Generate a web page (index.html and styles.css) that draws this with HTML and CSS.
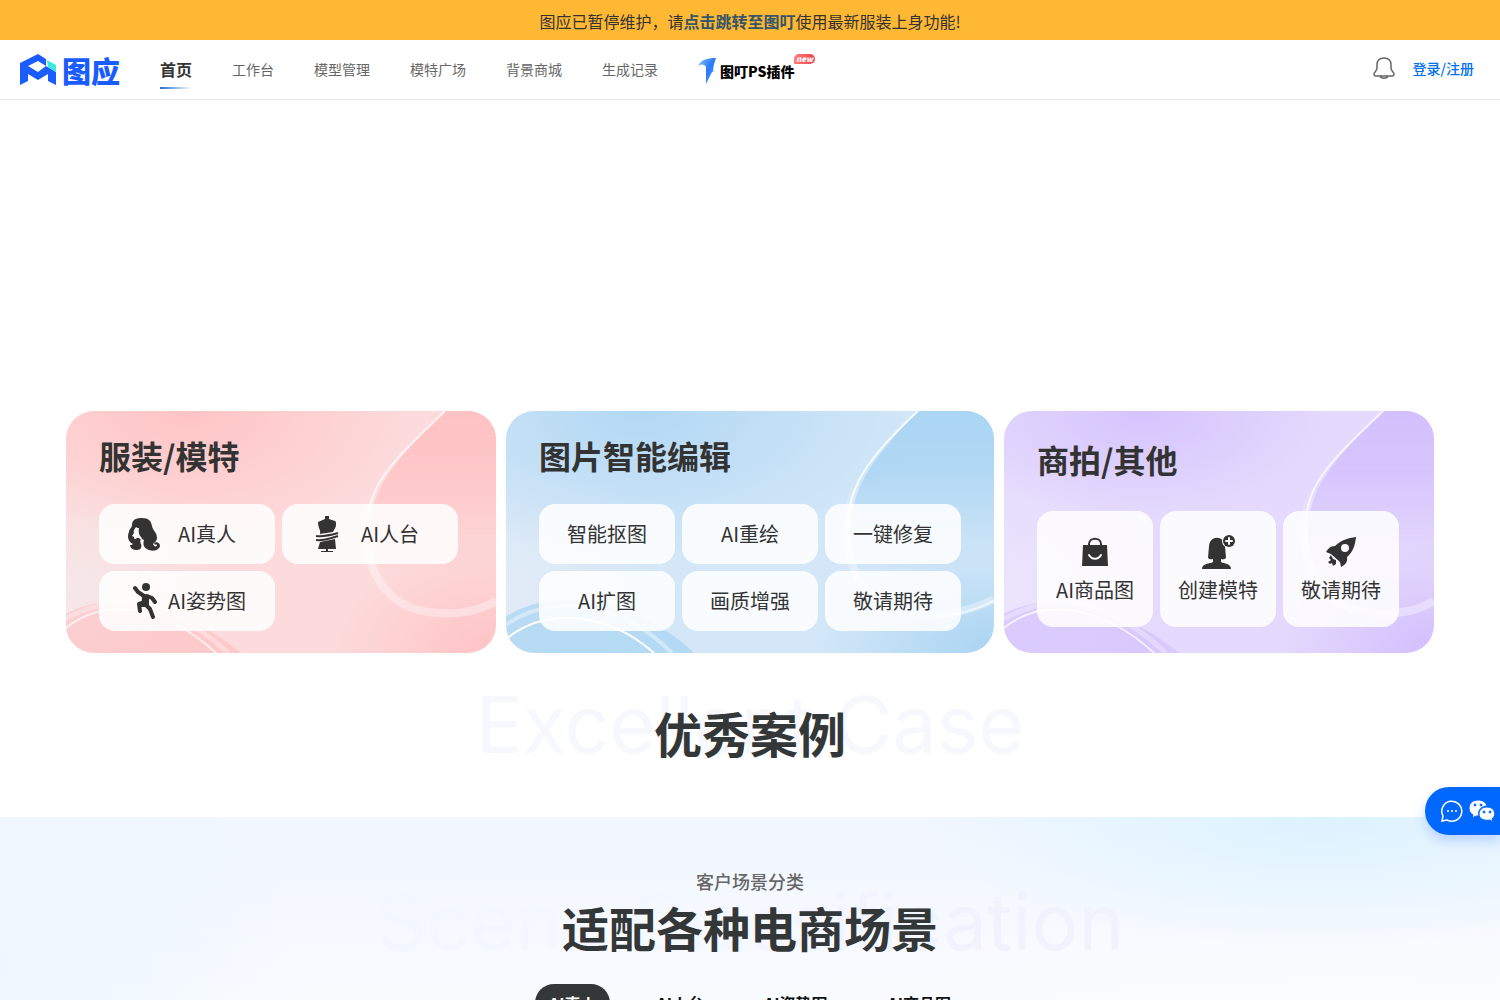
FILE: index.html
```
<!DOCTYPE html>
<html lang="zh-CN">
<head>
  <meta charset="UTF-8" />
  <meta name="viewport" content="width=device-width, initial-scale=1.0" />
  <title>图应</title>
  <link rel="stylesheet" href="styles.css">
</head>
<body>
  <svg class="defs" aria-hidden="true">
    <linearGradient id="fade" x1="0" y1="0" x2="0" y2="1">
      <stop offset="0" stop-color="#fff" />
      <stop offset=".3" stop-color="#fff" stop-opacity=".8" />
      <stop offset=".8" stop-color="#fff" stop-opacity="0" />
    </linearGradient>
    <mask id="fade-mask" maskContentUnits="objectBoundingBox">
      <rect width="1" height="1" fill="url(#fade)" />
    </mask>
    <linearGradient id="line-fade" x1="0" y1="0" x2="0" y2="1">
      <stop offset="0" stop-color="#fff" stop-opacity="0" />
      <stop offset=".4" stop-color="#fff" />
    </linearGradient>
    <symbol id="wave" viewBox="0 0 430 242" preserveAspectRatio="none">
      <path class="wave-fill" mask="url(#fade-mask)" d="M380 0C350 28 329 50 315 76C296 112 302 160 331 186C350 203 400 203 430 184V0Z" opacity=".7" />
      <path class="wave-fill" d="M0 203C40 180 110 190 175 242H0Z" opacity=".5" />
      <path class="wave-band" d="M311 76C292 112 298 160 327 186C350 206 400 208 430 190" stroke-width="8" opacity=".35" />
      <path class="wave-line" d="M379 0C350 28 325 50 311 76C304 90 301 106 301 122" stroke-width="2" opacity=".7" />
      <path class="wave-line" d="M0 217C40 184 100 196 150 242" stroke-width="2" opacity=".7" />
      <path class="wave-line" d="M0 208C40 184 100 184 162 242" stroke-width="5" opacity=".3" />
    </symbol>
    <symbol id="wave-wide" viewBox="0 0 488 242" preserveAspectRatio="none">
      <path class="wave-fill" mask="url(#fade-mask)" d="M413 0C390 22 372 44 361 62C342 92 342 130 351 156C366 196 424 214 488 184V0Z" opacity=".8" />
      <path class="wave-fill" d="M0 206C40 176 130 186 188 242H0Z" opacity=".6" />
      <path class="wave-band" d="M357 62C338 92 338 130 347 156C362 200 424 220 488 188" stroke-width="8" opacity=".35" />
      <path class="wave-line" d="M412 0C388 22 368 44 357 62C345 82 341 102 341 122" stroke-width="2" opacity=".8" />
      <path class="wave-line" d="M430 206C454 204 472 198 488 190" stroke-width="2" opacity=".6" />
      <path class="wave-line" d="M0 228C40 196 100 200 148 242" stroke-width="2" />
      <path class="wave-line" d="M0 214C40 184 110 186 166 242" stroke-width="4" opacity=".4" />
    </symbol>
  </svg>

  <div class="notice">
    图应已暂停维护，请<a href="#">点击跳转至图叮</a>使用最新服装上身功能!
  </div>

  <header class="header">
    <a class="logo" href="#">
      <svg class="logo-mark" viewBox="0 0 36 32" aria-hidden="true">
        <path fill="#1a5cff" fill-rule="evenodd" d="M18 0L26 5V12L36 18V31L28 27V20L18 26L8 20V27L0 31V9ZM18 7L8 12L18 18L26 12Z" />
        <path fill="#3ee8dc" d="M27 6L36 11V18L28 13Z" />
      </svg>
      <span class="logo-text">图应</span>
    </a>
    <nav class="nav">
      <a class="nav-link active" href="#">首页</a>
      <a class="nav-link" href="#">工作台</a>
      <a class="nav-link" href="#">模型管理</a>
      <a class="nav-link" href="#">模特广场</a>
      <a class="nav-link" href="#">背景商城</a>
      <a class="nav-link" href="#">生成记录</a>
      <a class="plugin" href="#">
        <svg class="plugin-mark" viewBox="0 0 18 26" aria-hidden="true">
          <defs>
            <linearGradient id="plugin-blue" x1="0" y1="0" x2="1" y2="1">
              <stop offset="0" stop-color="#8cc4ff" />
              <stop offset=".5" stop-color="#2878ff" />
              <stop offset="1" stop-color="#5fa4ff" />
            </linearGradient>
          </defs>
          <path fill="url(#plugin-blue)" d="M0 8C3 2 8 0 18 0L16 6L15 12L16 13L14 14L8 26V9C6 6 3 6 0 8Z" />
        </svg>
        <span class="plugin-text">图叮PS插件</span>
        <span class="badge">new</span>
      </a>
    </nav>
    <div class="user">
      <button class="bell" type="button" aria-label="通知">
        <svg viewBox="0 0 22 24" aria-hidden="true">
          <path d="M11 2C6 2 4 5 4 9V12C4 15 1 16 1 18C1 19 2 20 3 20H19C20 20 21 19 21 18C21 16 18 15 18 12V9C18 5 16 2 11 2ZM7 20C8 23 14 23 15 20" />
        </svg>
      </button>
      <a class="login" href="#">登录/注册</a>
    </div>
  </header>

  <main>
    <section class="hero"></section>

    <section class="cards">
      <div class="card card-pink">
        <svg class="card-bg" aria-hidden="true"><use href="#wave" /></svg>
        <h2>服装/模特</h2>
        <div class="tiles tiles-two">
          <a class="tile" href="#">
            <svg class="tile-icon" viewBox="0 0 36 36" aria-hidden="true">
              <path d="M6 9C6 3 11 2 16 2C23 2 25 5 26 10C27 15 31 16 31 22C31 25 28 27 27 28C28 31 31 31 31 29C31 28 29 29 28 28C29 25 34 26 34 30C33 35 25 36 21 33C17 31 17 27 18 24L16 23C14 23 14 26 15 28C16 31 15 34 11 34C7 34 4 32 4 29C5 29 6 29 7 28C2 26 1 20 3 16C3 13 6 12 6 9ZM10 11C9 13 7 14 8 17L6 20L8 21C8 23 9 24 11 22L13 22L15 24L16 22C14 20 12 18 13 12C12 12 11 12 10 11Z" fill-rule="evenodd" />
            </svg>
            <span>AI真人</span>
          </a>
          <a class="tile" href="#">
            <svg class="tile-icon" viewBox="0 0 36 36" aria-hidden="true">
              <path d="M16 0H20V3L26 5C28 6 27 12 25 14L24 16L11 18C12 14 9 12 9 6L16 3ZM11 26L26 23L27 33H9Z" />
              <path class="tile-tape" d="M7 20C15 21 22 19 29 17M7 24C15 25 22 22 29 20" />
              <path d="M17 33H19V35H24V36H12V35H17Z" />
            </svg>
            <span>AI人台</span>
          </a>
          <a class="tile tile-close" href="#">
            <svg class="tile-icon" viewBox="0 0 36 36" aria-hidden="true">
              <circle cx="18" cy="4" r="4" />
              <path class="limb" d="M7 5L10 9L16 13M19 13L24 15L27 19M14 20L11 21L12 28M18 22L22 26L25 34" />
              <path d="M13 11L21 12V21L20 24H13L14 15Z" />
            </svg>
            <span>AI姿势图</span>
          </a>
        </div>
      </div>

      <div class="card card-blue">
        <svg class="card-bg" aria-hidden="true"><use href="#wave-wide" /></svg>
        <h2>图片智能编辑</h2>
        <div class="tiles tiles-three">
          <a class="tile" href="#">智能抠图</a>
          <a class="tile" href="#">AI重绘</a>
          <a class="tile" href="#">一键修复</a>
          <a class="tile" href="#">AI扩图</a>
          <a class="tile" href="#">画质增强</a>
          <a class="tile" href="#">敬请期待</a>
        </div>
      </div>

      <div class="card card-purple">
        <svg class="card-bg" aria-hidden="true"><use href="#wave" /></svg>
        <h2>商拍/其他</h2>
        <div class="tiles tiles-square">
          <a class="tile" href="#">
            <svg class="tile-icon" viewBox="0 0 36 36" aria-hidden="true">
              <path d="M6 11H30L31 32H5Z" />
              <path class="handle" d="M12 13V10C12 3 24 3 24 10V13" />
              <path class="smile" d="M12 21C15 26 21 26 24 21" />
            </svg>
            <span>AI商品图</span>
          </a>
          <a class="tile" href="#">
            <svg class="tile-icon" viewBox="0 0 36 36" aria-hidden="true">
              <path d="M8 24L9 12C10 1 24 1 25 12L26 24C24 26 22 25 21 25V28C24 30 31 29 31 35H2C2 29 10 30 13 28V25C12 25 10 26 8 24Z" />
              <circle class="plus-ring" cx="29" cy="7" r="7" />
              <circle cx="29" cy="7" r="6" />
              <path class="plus" d="M29 4V10M26 7H32" />
            </svg>
            <span>创建模特</span>
          </a>
          <a class="tile" href="#">
            <svg class="tile-icon" viewBox="0 0 36 36" aria-hidden="true">
              <path fill-rule="evenodd" d="M33 3C25 4 18 6 12 12C7 12 5 15 3 18L8 20L17 28L18 33C22 31 25 28 24 23C30 18 32 12 33 3ZM22 10A4 4 0 1 1 22 18A4 4 0 1 1 22 10Z" />
              <path d="M8 21L6 24L8 26L5 28L7 30L9 29L10 32L13 30L13 26L10 25Z" />
            </svg>
            <span>敬请期待</span>
          </a>
        </div>
      </div>
    </section>

    <section class="cases">
      <span class="ghost">Excellent Case</span>
      <h2>优秀案例</h2>
    </section>

    <section class="scene">
      <p>客户场景分类</p>
      <div class="scene-title">
        <span class="ghost">Scene Classification</span>
        <h2>适配各种电商场景</h2>
      </div>
      <div class="tabs">
        <button class="tab active" type="button">AI真人</button>
        <button class="tab" type="button">AI人台</button>
        <button class="tab" type="button">AI姿势图</button>
        <button class="tab" type="button">AI商品图</button>
      </div>
    </section>
  </main>

  <button class="contact" type="button" aria-label="联系客服">
    <svg class="chat" viewBox="0 0 24 24" aria-hidden="true">
      <path d="M2 22L3 17A10 10 0 1 1 7 21Z" />
      <circle cx="8" cy="12" r="1" />
      <circle cx="12" cy="12" r="1" />
      <circle cx="16" cy="12" r="1" />
    </svg>
    <svg class="wechat" viewBox="0 0 28 24" aria-hidden="true">
      <path d="M10 1C4 1 1 5 1 9C1 12 2 14 5 16L4 19L8 17H11C9 11 14 7 19 7C18 3 14 1 10 1Z" />
      <path d="M19 8C14 8 11 11 11 15C11 20 16 22 22 21L25 23L24 20C29 16 27 8 19 8Z" />
      <g class="eyes">
        <circle cx="7" cy="6" r="1" />
        <circle cx="13" cy="6" r="1" />
        <circle cx="16" cy="13" r="1" />
        <circle cx="22" cy="13" r="1" />
      </g>
    </svg>
  </button>
</body>
</html>
```
FILE: styles.css
```
* {
  box-sizing: border-box;
}

body {
  margin: 0;
  font-family: "Noto Sans CJK SC", sans-serif;
  color: #333;
  background: #fff;
  overflow-x: hidden;
}

a {
  color: inherit;
  text-decoration: none;
}

button {
  border: none;
  padding: 0;
  font-family: inherit;
  cursor: pointer;
}

h2,
p {
  margin: 0;
}

.defs {
  position: absolute;
  width: 0;
  height: 0;
}

/* notice */
.notice {
  height: 40px;
  line-height: 42px;
  text-align: center;
  font-size: 16px;
  background: #ffb833;
}

.notice a {
  font-weight: 700;
  color: #35556a;
}

/* header */
.header {
  display: flex;
  align-items: center;
  height: 60px;
  padding: 0 26px 0 20px;
  border-bottom: 1px solid #ebebeb;
}

.logo {
  display: flex;
  align-items: center;
  gap: 6px;
  width: 100px;
  margin-right: 40px;
}

.logo-mark {
  flex: none;
  width: 36px;
  height: 32px;
}

.logo-text {
  font-size: 29px;
  line-height: 32px;
  font-weight: 900;
  color: #1a5cff;
  white-space: nowrap;
}

.nav {
  display: flex;
  align-items: center;
  gap: 40px;
  height: 100%;
  padding-bottom: 2px;
}

.nav-link {
  position: relative;
  font-size: 14px;
  line-height: 40px;
  color: #666;
}

.nav-link.active {
  font-size: 16px;
  font-weight: 700;
  color: #333;
}

.nav-link.active::after {
  content: "";
  position: absolute;
  left: 0;
  bottom: 0;
  width: 100%;
  height: 2px;
  background: linear-gradient(90deg, #2a72d8, #fff);
}

.plugin {
  position: relative;
  display: flex;
  align-items: center;
  gap: 4px;
  margin-top: 4px;
}

.plugin-mark {
  width: 18px;
  height: 26px;
}

.plugin-text {
  font-size: 14px;
  line-height: 26px;
  font-weight: 900;
  color: #000;
}

.badge {
  position: absolute;
  left: 96px;
  top: -4px;
  width: 21px;
  border-radius: 5px 5px 5px 0;
  font-size: 8px;
  line-height: 10px;
  font-style: italic;
  font-weight: 900;
  text-align: center;
  color: #fff;
  background: linear-gradient(90deg, #ff7d7d, #ee3f45);
}

.user {
  display: flex;
  align-items: center;
  gap: 18px;
  margin-left: auto;
  padding-bottom: 4px;
}

.bell {
  width: 22px;
  height: 24px;
  background: none;
}

.bell svg {
  display: block;
  fill: none;
  stroke: #666;
  stroke-width: 1.5;
}

.login {
  font-size: 14px;
  font-weight: 500;
  color: #0070f0;
}

/* cards */
.hero {
  height: 311px;
}

.cards {
  display: grid;
  grid-template-columns: 430fr 488fr 430fr;
  gap: 10px;
  padding: 0 66px;
}

.card {
  position: relative;
  overflow: hidden;
  padding: 20px 33px 22px;
  border-radius: 28px;
}

.card-bg {
  position: absolute;
  left: 0;
  top: 0;
  width: 100%;
  height: 100%;
}

.wave-fill {
  fill: var(--tint);
}

.wave-line {
  fill: none;
  stroke: #fff;
}

.wave-band {
  fill: none;
  stroke: url(#line-fade);
}

.card-pink {
  --tint: #ffb8ba;
  background:
    radial-gradient(ellipse 220px 130px at 28% 0%, #ffc4c5, transparent),
    radial-gradient(ellipse 160px 140px at 0% 75%, #f5e8e9, transparent),
    radial-gradient(ellipse 160px 110px at 100% 100%, #ffc2c4, transparent),
    #fddadb;
}

.card-blue {
  --tint: #9fd0f2;
  background:
    radial-gradient(ellipse 280px 150px at 28% 0%, #b3d8f4, transparent),
    radial-gradient(ellipse 180px 140px at 0% 75%, #e2ebf6, transparent),
    radial-gradient(ellipse 180px 110px at 100% 100%, #a9d4f3, transparent),
    #d3e7f8;
}

.card-purple {
  --tint: #cbb5fd;
  background:
    radial-gradient(ellipse 200px 110px at 32% 0%, #d5c4fd, transparent),
    radial-gradient(ellipse 160px 140px at 0% 75%, #ece4fc, transparent),
    radial-gradient(ellipse 160px 110px at 100% 100%, #d2befd, transparent),
    #e5dafd;
}

.card h2 {
  position: relative;
  margin-bottom: 25px;
  font-size: 32px;
  line-height: 48px;
  font-weight: 700;
}

.tiles {
  position: relative;
  display: grid;
  gap: 7px;
}

.tiles-two {
  grid-template-columns: repeat(2, 176px);
}

.tiles-three {
  grid-template-columns: repeat(3, 136px);
}

.tiles-square {
  grid-template-columns: repeat(3, 116px);
}

.tile {
  display: flex;
  align-items: center;
  justify-content: center;
  height: 60px;
  border-radius: 16px;
  font-size: 20px;
  line-height: 30px;
  background: rgba(255, 255, 255, 0.85);
}

.tile-icon {
  width: 36px;
  height: 36px;
  fill: #333;
}

.tiles-two .tile {
  gap: 16px;
  padding-right: 12px;
}

.tiles-two .tile-close {
  gap: 4px;
  padding-right: 0;
}

.card-purple {
  padding: 24px 33px 26px;
}

.card-purple h2 {
  margin-bottom: 28px;
}

.tiles-square .tile {
  flex-direction: column;
  gap: 5px;
  height: 116px;
}

.tile-tape {
  fill: none;
  stroke: #333;
  stroke-width: 2;
}

.limb {
  fill: none;
  stroke: #333;
  stroke-width: 4;
  stroke-linecap: round;
  stroke-linejoin: round;
}

.handle {
  fill: none;
  stroke: #333;
  stroke-width: 2;
}

.smile,
.plus {
  fill: none;
  stroke: #fff;
  stroke-width: 2;
  stroke-linecap: round;
}

.plus-ring {
  fill: #fff;
}

/* titles */
.ghost {
  position: absolute;
  left: 50%;
  top: 50%;
  transform: translate(-50%, -50%);
  font-family: Inter, sans-serif;
  font-size: 79px;
  line-height: 96px;
  font-weight: 400;
  white-space: nowrap;
  color: #f7f8fe;
}

.cases,
.scene-title {
  position: relative;
  text-align: center;
}

.cases {
  height: 164px;
  padding-top: 43px;
}

.cases .ghost {
  top: 71px;
}

.cases h2,
.scene h2 {
  position: relative;
  font-size: 48px;
  line-height: 72px;
  font-weight: 700;
  color: #333738;
}

.scene {
  display: flex;
  flex-direction: column;
  align-items: center;
  padding: 51px 0 40px;
  background:
    radial-gradient(ellipse 400px 130px at 88% 0%, #dcf3ff, transparent),
    radial-gradient(ellipse 700px 200px at 90% 110%, #fdfcff, transparent),
    radial-gradient(ellipse 300px 300px at 0% 60%, #eef7ff, transparent),
    linear-gradient(180deg, #f1f6ff, #fafcff 90%);
}

.scene p {
  font-size: 18px;
  line-height: 26px;
  font-weight: 500;
  color: #666;
}

.scene-title {
  margin-top: -3px;
}

.scene .scene-title h2 {
  font-size: 47px;
}

.scene .ghost {
  top: 31px;
  font-size: 78px;
  color: transparent;
  background: linear-gradient(90deg, #f3f7ff 40%, #f0f3fd 75%);
  background-clip: text;
}

.tabs {
  display: flex;
  gap: 32px;
  margin-top: 21px;
}

.tab {
  height: 38px;
  padding: 0 14px;
  border-radius: 19px;
  font-size: 16px;
  font-weight: 700;
  color: #111;
  background: none;
}

.tab.active {
  color: #fff;
  background: #333738;
}

/* contact */
.contact {
  position: fixed;
  right: 0;
  top: 787px;
  display: flex;
  align-items: center;
  gap: 4px;
  height: 48px;
  padding: 0 4px 0 15px;
  border-radius: 24px 0 0 24px;
  background: #0067ff;
  box-shadow: 0 6px 12px rgba(60, 110, 255, 0.25);
}

.chat {
  width: 24px;
  height: 24px;
  fill: none;
  stroke: #fff;
  stroke-width: 1.5;
}

.chat circle {
  fill: #fff;
  stroke: none;
}

.wechat {
  width: 28px;
  height: 24px;
  fill: #fff;
  stroke: #0067ff;
}

.eyes {
  fill: #0067ff;
}
```
